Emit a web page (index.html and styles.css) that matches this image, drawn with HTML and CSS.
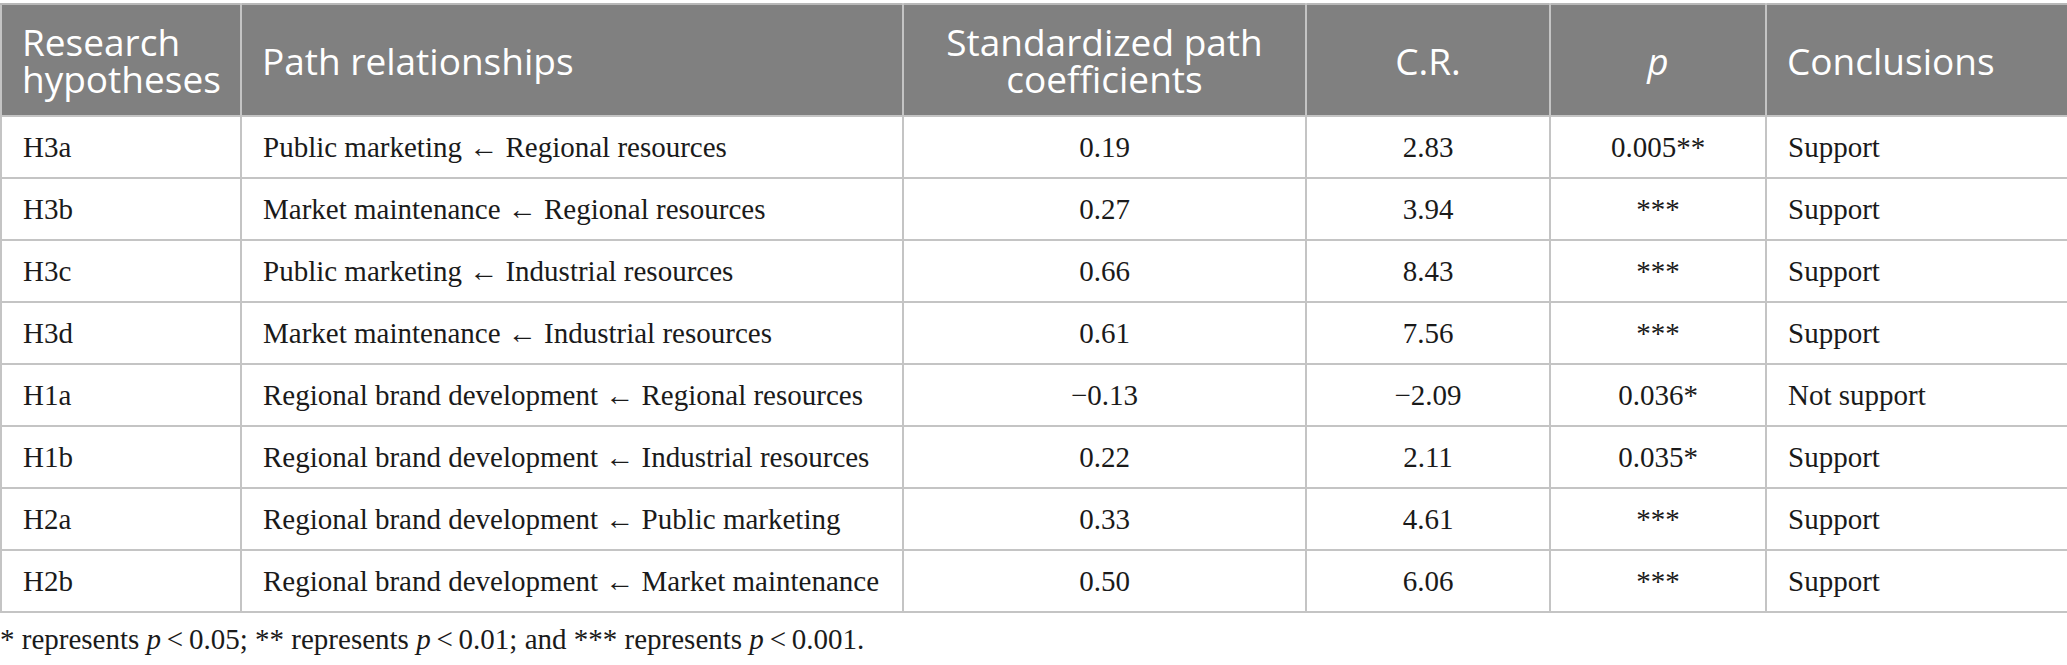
FILE: index.html
```html
<!DOCTYPE html>
<html lang="en">
<head>
    <meta charset="UTF-8">
    <title>Path analysis results</title>
    <link rel="stylesheet" href="styles.css">
</head>
<body>
    <table class="results">
        <colgroup>
            <col class="c-hyp">
            <col class="c-path">
            <col class="c-coef">
            <col class="c-cr">
            <col class="c-p">
            <col class="c-conc">
        </colgroup>
        <thead>
            <tr>
                <th>Research hypotheses</th>
                <th>Path relationships</th>
                <th class="num">Standardized path coefficients</th>
                <th class="num">C.R.</th>
                <th class="num"><i>p</i></th>
                <th>Conclusions</th>
            </tr>
        </thead>
        <tbody>
            <tr>
                <td>H3a</td>
                <td>Public marketing ← Regional resources</td>
                <td class="num">0.19</td>
                <td class="num">2.83</td>
                <td class="num">0.005**</td>
                <td>Support</td>
            </tr>
            <tr>
                <td>H3b</td>
                <td>Market maintenance ← Regional resources</td>
                <td class="num">0.27</td>
                <td class="num">3.94</td>
                <td class="num">***</td>
                <td>Support</td>
            </tr>
            <tr>
                <td>H3c</td>
                <td>Public marketing ← Industrial resources</td>
                <td class="num">0.66</td>
                <td class="num">8.43</td>
                <td class="num">***</td>
                <td>Support</td>
            </tr>
            <tr>
                <td>H3d</td>
                <td>Market maintenance ← Industrial resources</td>
                <td class="num">0.61</td>
                <td class="num">7.56</td>
                <td class="num">***</td>
                <td>Support</td>
            </tr>
            <tr>
                <td>H1a</td>
                <td>Regional brand development ← Regional resources</td>
                <td class="num">−0.13</td>
                <td class="num">−2.09</td>
                <td class="num">0.036*</td>
                <td>Not support</td>
            </tr>
            <tr>
                <td>H1b</td>
                <td>Regional brand development ← Industrial resources</td>
                <td class="num">0.22</td>
                <td class="num">2.11</td>
                <td class="num">0.035*</td>
                <td>Support</td>
            </tr>
            <tr>
                <td>H2a</td>
                <td>Regional brand development ← Public marketing</td>
                <td class="num">0.33</td>
                <td class="num">4.61</td>
                <td class="num">***</td>
                <td>Support</td>
            </tr>
            <tr>
                <td>H2b</td>
                <td>Regional brand development ← Market maintenance</td>
                <td class="num">0.50</td>
                <td class="num">6.06</td>
                <td class="num">***</td>
                <td>Support</td>
            </tr>
        </tbody>
    </table>

    <p class="footnote">* represents <i>p</i>&thinsp;&lt;&thinsp;0.05; ** represents <i>p</i>&thinsp;&lt;&thinsp;0.01; and *** represents <i>p</i>&thinsp;&lt;&thinsp;0.001.</p>
</body>
</html>
```

FILE: styles.css
```css
body {
    margin: 0;
    padding-top: 3px;
    background-color: #fff;
    color: #1a1a1a;
    font-family: "Liberation Serif", "Times New Roman", serif;
}

.results {
    width: 2067px;
    border-collapse: collapse;
    table-layout: fixed;
}

.c-hyp { width: 240px; }
.c-path { width: 662px; }
.c-coef { width: 403px; }
.c-cr { width: 244px; }
.c-p { width: 216px; }
.c-conc { width: 302px; }

.results th {
    height: 110px;
    padding: 0 20px;
    background-color: #808080;
    color: #fff;
    font-family: "Open Sans", "Noto Sans", sans-serif;
    font-size: 37px;
    font-weight: normal;
    line-height: 37px;
    text-align: left;
    border: 2px solid #c4c4c4;
    border-top-color: #b8b8b8;
    border-bottom-color: #c4c4c4;
}

.results thead th + th {
    border-left-color: #a6a6a6;
}

.results td {
    height: 60px;
    padding: 0 21px;
    font-size: 29px;
    line-height: 32px;
    border: 2px solid #c4c4c4;
}

.results .num {
    text-align: center;
}

.footnote {
    margin: 10px 0 0;
    font-size: 29px;
    line-height: 32px;
}
```
